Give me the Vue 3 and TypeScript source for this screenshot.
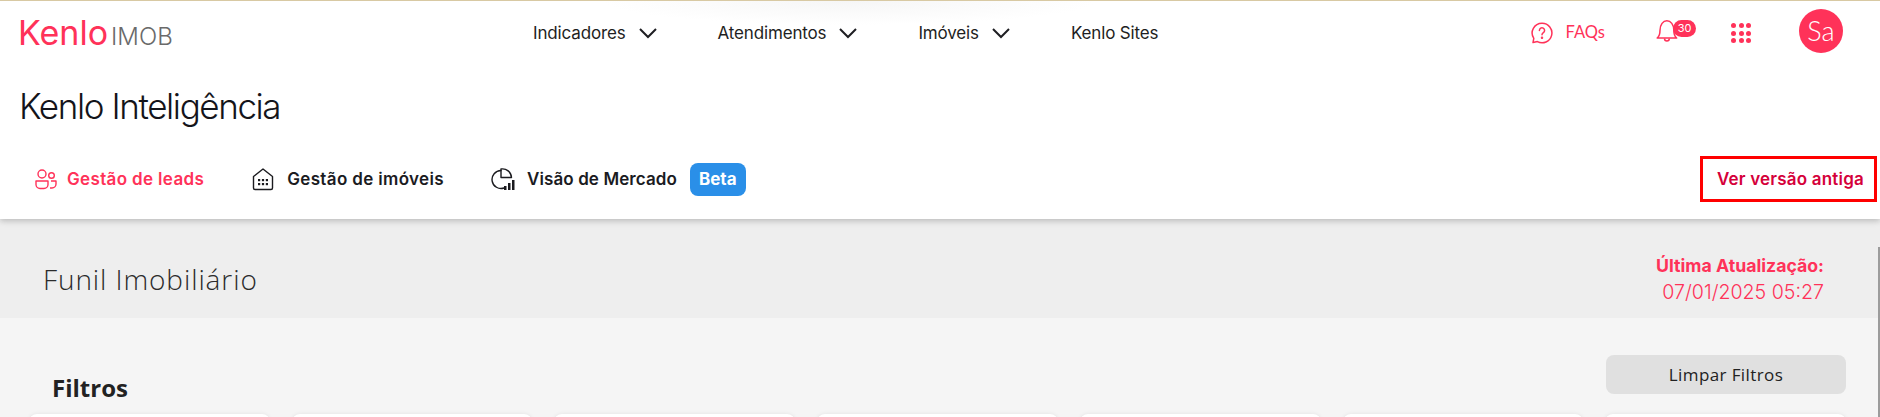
<script setup lang="ts">
const navItems = [
  { label: 'Indicadores', arrow: true },
  { label: 'Atendimentos', arrow: true },
  { label: 'Imóveis', arrow: true },
  { label: 'Kenlo Sites', arrow: false },
]

const filterCards = 7
</script>

<template>
  <div class="page">
    <header class="top">
      <div class="topbar">
        <div class="logo">
          <span class="logo-mark">Kenlo</span>
          <span class="logo-sub">IMOB</span>
        </div>
        <nav class="nav">
          <a v-for="item in navItems" :key="item.label" class="nav-item">
            {{ item.label }}
            <svg v-if="item.arrow" width="20" height="12" viewBox="0 0 20 12" fill="none">
              <path d="M2 2l8 8 8-8" stroke="#1e1e22" stroke-width="2" />
            </svg>
          </a>
        </nav>
        <div class="actions">
          <a class="faq">
            <svg width="24" height="24" viewBox="0 0 24 24" fill="none" stroke="#ff3259" stroke-width="1.5">
              <path d="M12 2.2a9.8 9.8 0 1 1-4.6 18.4l-4.4 1 .8-4.2A9.8 9.8 0 0 1 12 2.2z" stroke-linejoin="round" />
              <path d="M9.4 9.4a2.6 2.6 0 1 1 4 2.2c-.9.6-1.4 1.1-1.4 2.2" stroke-linecap="round" />
              <circle cx="12" cy="16.8" r=".5" fill="#ff3259" />
            </svg>
            <span>FAQs</span>
          </a>
          <div class="bell">
            <svg width="24" height="26" viewBox="0 0 22 24" fill="none" stroke="#ff3259" stroke-width="1.4">
              <path d="M1 18.500c2-1.500 2.600-3 2.600-7C3.600 6 6.500 2.500 10 2.500s6.400 3.500 6.400 9c0 4 .6 5.500 2.600 7z" stroke-linejoin="round" />
              <path d="M7.800 19c0 3 4.400 3 4.400 0" />
            </svg>
            <span class="badge">30</span>
          </div>
          <div class="apps">
            <i v-for="n in 9" :key="n" />
          </div>
          <div class="avatar">Sa</div>
        </div>
      </div>
      <h1 class="title">Kenlo Inteligência</h1>
      <div class="tabs">
        <a class="tab active">
          <svg width="24" height="24" viewBox="0 0 24 24" fill="none" stroke="#ff3259" stroke-width="1.4">
            <circle cx="8" cy="7" r="4" />
            <circle cx="17.500" cy="8.500" r="2.800" />
            <path d="M2 14h12v3.500a4 4 0 0 1-4 4H6a4 4 0 0 1-4-4z" stroke-linejoin="round" />
            <path d="M17 14h5v3a4 4 0 0 1-4 4h-2" stroke-linejoin="round" />
          </svg>
          Gestão de leads
        </a>
        <a class="tab">
          <svg width="24" height="24" viewBox="0 0 24 24" fill="none" stroke="#1b1b1f" stroke-width="1.4">
            <path d="M12 2l9.500 7.500V21a1.500 1.500 0 0 1-1.500 1.500H4A1.500 1.500 0 0 1 2.500 21V9.500z" stroke-linejoin="round" />
            <g fill="#1b1b1f" stroke="none">
              <rect x="7" y="12" width="2.200" height="2.200" />
              <rect x="10.900" y="12" width="2.200" height="2.200" />
              <rect x="14.800" y="12" width="2.200" height="2.200" />
              <rect x="7" y="16" width="2.200" height="2.200" />
              <rect x="10.900" y="16" width="2.200" height="2.200" />
              <rect x="14.800" y="16" width="2.200" height="2.200" />
            </g>
          </svg>
          Gestão de imóveis
        </a>
        <a class="tab market">
          <svg width="24" height="24" viewBox="0 0 24 24" fill="none" stroke="#1b1b1f" stroke-width="1.4">
            <path d="M10 3.500a9 9 0 1 0 3 17.500" stroke-linecap="round" />
            <path d="M10 2v8.500h10.500A9 9 0 0 0 10 2z" stroke-linejoin="round" />
            <g fill="#1b1b1f" stroke="none">
              <rect x="13" y="19" width="2.500" height="4" />
              <rect x="17" y="16" width="2.500" height="7" />
              <rect x="21" y="13" width="2.500" height="10" />
            </g>
          </svg>
          Visão de Mercado
          <span class="beta">Beta</span>
        </a>
        <a class="old-version">Ver versão antiga</a>
      </div>
    </header>

    <main class="content">
      <section class="band">
        <h2 class="band-title">Funil Imobiliário</h2>
        <div class="updated">
          <strong>Última Atualização:</strong>
          <span>07/01/2025 05:27</span>
        </div>
      </section>
      <section class="filters">
        <div class="filters-head">
          <h3>Filtros</h3>
          <button class="clear" type="button">Limpar Filtros</button>
        </div>
        <div class="cards">
          <div v-for="n in filterCards" :key="n" class="card" />
        </div>
      </section>
    </main>
    <div class="scroll-line" />
  </div>
</template>

<style>
html, body {
  margin: 0;
  overflow: hidden;
}
</style>

<style scoped>
.page {
  position: relative;
  width: 1880px;
  height: 417px;
  overflow: hidden;
  background: #f5f5f5;
  font-family: Inter, "Liberation Sans", sans-serif;
  display: flex;
  flex-direction: column;
}
.scroll-line {
  position: absolute;
  top: 247px;
  right: 0;
  bottom: 0;
  width: 2px;
  background: #9c9c9c;
}
.top {
  position: relative;
  z-index: 1;
  height: 219px;
  box-sizing: border-box;
  flex: none;
  background: #fff;
  border-top: 1px solid #d8c9a3;
  box-shadow: 0 2px 6px rgba(0, 0, 0, 0.22);
  display: flex;
  flex-direction: column;
}
.top::before {
  content: "";
  position: absolute;
  left: 600px;
  top: 0;
  width: 500px;
  height: 24px;
  background: radial-gradient(ellipse at 50% 0, #f6f6f6, #fff 70%);
}
.topbar {
  position: relative;
  height: 64px;
  display: flex;
  align-items: center;
  padding-left: 18px;
  flex: none;
}
.logo {
  width: 515px;
  display: flex;
  align-items: baseline;
  gap: 3px;
  flex: none;
}
.logo-mark {
  font-size: 34px;
  line-height: 36px;
  font-weight: 400;
  color: #ff3259;
}
.logo-sub {
  font-size: 24px;
  font-weight: 300;
  color: #6a6a6a;
}
.nav {
  display: flex;
  gap: 60px;
  align-items: center;
}
.nav-item {
  display: flex;
  align-items: center;
  gap: 12px;
  font-size: 17px;
  color: #1e1e22;
  letter-spacing: -0.15px;
}
.actions {
  margin-left: auto;
  display: flex;
  align-items: center;
  padding-right: 37px;
}
.faq {
  display: flex;
  align-items: center;
  gap: 12px;
  font-family: Lato, sans-serif;
  font-size: 16.500px;
  color: #ff3259;
}
.faq span {
  padding-bottom: 3px;
}
.bell {
  position: relative;
  margin-left: 53px;
  width: 38px;
  height: 24px;
}
.bell svg {
  margin: -3px 0 0 -2px;
}
.badge {
  position: absolute;
  left: 15px;
  top: -1px;
  width: 23px;
  height: 17px;
  border-radius: 9px;
  background: #ff3259;
  color: #fff;
  font-size: 11px;
  line-height: 17px;
  text-align: center;
}
.apps {
  margin-left: 35px;
  display: grid;
  grid-template-columns: repeat(3, 5px);
  gap: 2.500px;
}
.apps i {
  width: 5px;
  height: 5px;
  border-radius: 50%;
  background: #ff3259;
}
.avatar {
  margin: 0 0 4px 48px;
  width: 44px;
  height: 44px;
  border-radius: 50%;
  background: #ff3259;
  color: #fff;
  font-family: Lato, sans-serif;
  font-weight: 300;
  font-size: 27px;
  line-height: 44px;
  text-align: center;
}
.title {
  margin: 19px 0 0 19px;
  font-size: 35px;
  line-height: 44px;
  font-weight: 300;
  letter-spacing: -1.400px;
  color: #14141a;
}
.tabs {
  margin-top: 28px;
  display: flex;
  align-items: center;
  padding: 0 3px 0 34px;
}
.tab {
  display: flex;
  align-items: center;
  gap: 12px;
  margin-right: 47px;
  font-size: 17px;
  font-weight: 600;
  letter-spacing: 0.35px;
  color: #1b1b1f;
}
.tab.active {
  gap: 9px;
  color: #ff3259;
}
.tab.market {
  letter-spacing: 0.1px;
}
.beta {
  margin-left: 1px;
  padding: 0 9px;
  height: 33px;
  line-height: 33px;
  border-radius: 8px;
  background: #2a8fe8;
  color: #fff;
  font-size: 17px;
  font-weight: 700;
  letter-spacing: 0;
}
.old-version {
  margin-left: auto;
  padding: 0 10px 0 14px;
  height: 46px;
  box-sizing: border-box;
  border: 3px solid #f00;
  line-height: 40px;
  font-size: 17px;
  font-weight: 600;
  letter-spacing: 0.2px;
  color: #d5003a;
  white-space: nowrap;
}
.content {
  flex: 1;
  display: flex;
  flex-direction: column;
}
.band {
  height: 99px;
  flex: none;
  background: #eee;
  display: flex;
  justify-content: space-between;
  align-items: center;
  padding: 14px 56px 0 43px;
  box-sizing: border-box;
}
.band-title {
  margin: 6px 0 0;
  font-family: "Open Sans", sans-serif;
  font-size: 28px;
  font-weight: 300;
  letter-spacing: 0.9px;
  color: #2b2b2b;
}
.updated {
  display: flex;
  flex-direction: column;
  align-items: flex-end;
  color: #ff3259;
  font-size: 17.700px;
  line-height: 26px;
  padding-top: 7px;
}
.updated strong {
  font-weight: 700;
}
.updated span {
  font-size: 19.600px;
  font-weight: 300;
}
.filters {
  padding: 37px 34px 0 29px;
}
.filters-head {
  display: flex;
  justify-content: space-between;
  align-items: flex-start;
  padding-left: 23px;
  height: 59px;
}
.filters-head h3 {
  margin: 16px 0 0;
  font-family: "Open Sans", sans-serif;
  font-size: 24px;
  font-weight: 700;
  color: #222;
}
.clear {
  width: 240px;
  height: 39px;
  border: 0;
  border-radius: 8px;
  background: #e0e0e0;
  font-family: "Open Sans", sans-serif;
  font-size: 17px;
  letter-spacing: 0.4px;
  color: #222;
}
.cards {
  display: grid;
  grid-template-columns: repeat(7, 1fr);
  gap: 22px;
}
.card {
  height: 60px;
  border-radius: 8px;
  background: #fff;
  box-shadow: 0 0 4px rgba(0, 0, 0, 0.08);
}
</style>
